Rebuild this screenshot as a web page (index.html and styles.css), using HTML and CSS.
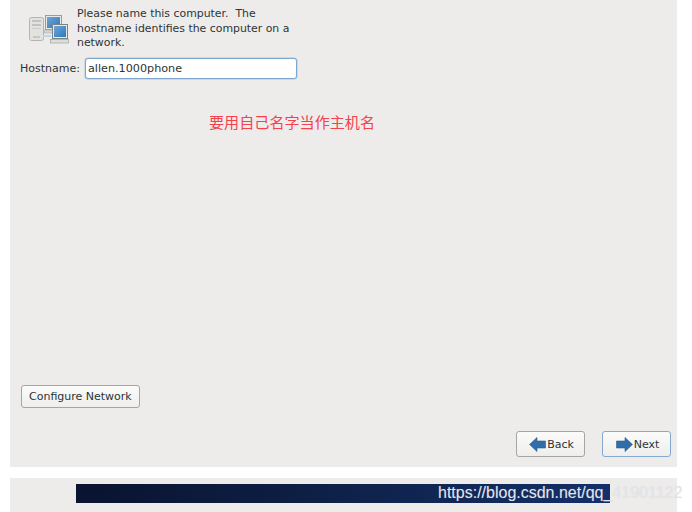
FILE: index.html
```html
<!DOCTYPE html>
<html lang="en">
<head>
<meta charset="utf-8">
<title>Hostname</title>
<link rel="stylesheet" href="styles.css">
</head>
<body>
<main class="panel">
  <div class="intro">
    <svg class="computers" width="40" height="30" viewBox="0 0 40 30" aria-hidden="true">
      <defs>
        <linearGradient id="scr" x1="0" y1="0" x2="1" y2="1">
          <stop offset="0" stop-color="#6ea6d8"/>
          <stop offset="1" stop-color="#2f78bd"/>
        </linearGradient>
      </defs>
      <rect x="0.5" y="2.5" width="14" height="23" rx="2" fill="#e2e3e0" stroke="#b3b5b2"/>
      <rect x="3" y="5" width="9" height="2" fill="#c2c4c0"/>
      <rect x="3" y="9" width="9" height="2" fill="#c2c4c0"/>
      <rect x="3" y="13" width="9" height="1" fill="#cbcdc9"/>
      <rect x="4" y="21" width="7" height="2" fill="#c6c8c4"/>
      <rect x="14" y="20" width="8" height="2" fill="#b8d6ee"/>
      <rect x="16.5" y="0.5" width="16" height="14" fill="#e9eae7" stroke="#9a9c99"/>
      <rect x="18" y="2" width="13" height="11" fill="url(#scr)"/>
      <rect x="15.5" y="15" width="17" height="3" fill="#d3d5d1" stroke="#aeb0ad" stroke-width="0.6"/>
      <rect x="23.5" y="9.5" width="15" height="14" fill="#e9eae7" stroke="#7f817e"/>
      <rect x="25" y="11" width="12" height="11" fill="url(#scr)"/>
      <rect x="21.5" y="24.5" width="18" height="3.5" fill="#dcdeda" stroke="#959794" stroke-width="0.6"/>
    </svg>
    <p class="intro-text">Please name this computer.&nbsp; The hostname identifies the computer on a network.</p>
  </div>
  <div class="host-row">
    <label class="host-label" for="host">Hostname:</label>
    <input class="host-input" id="host" type="text" value="allen.1000phone">
  </div>
  <p class="note">要用自己名字当作主机名</p>
  <div class="config-row">
    <button class="btn" type="button">Configure Network</button>
  </div>
  <div class="nav-row">
    <button class="btn nav-btn" type="button">
      <svg width="17" height="15" viewBox="0 0 17 15" aria-hidden="true"><path d="M0.5 7.5 8 0.5V4H16.5V11H8V14.5Z" fill="#2f6ea8" stroke="#2a5f92" stroke-width="0.6"/></svg>
      Back
    </button>
    <button class="btn nav-btn focus" type="button">
      <svg width="17" height="15" viewBox="0 0 17 15" aria-hidden="true"><path d="M16.5 7.5 9 0.5V4H0.5V11H9V14.5Z" fill="#2f6ea8" stroke="#2a5f92" stroke-width="0.6"/></svg>
      Next
    </button>
  </div>
</main>
<footer class="footer">
  <div class="banner"></div>
  <span class="watermark">https://blog.csdn.net/qq_41901122</span>
</footer>
</body>
</html>
```

FILE: styles.css
```css
html, body {
  margin: 0;
  padding: 0;
  height: 512px;
  overflow: hidden;
  background: #fff;
}
body {
  font-family: "DejaVu Sans", sans-serif;
  font-size: 11px;
  color: #2e3436;
}
.panel {
  width: 667px;
  height: 467px;
  margin-left: 10px;
  background: #edecea;
  display: flex;
  flex-direction: column;
  box-sizing: border-box;
  padding: 6px 6px 10px 10px;
}
.intro {
  display: flex;
  align-items: flex-start;
  gap: 8px;
  padding-left: 9px;
}
.computers {
  margin-top: 9px;
  flex: none;
}
.intro-text {
  margin: 1px 0 0;
  width: 222px;
  font-size: 10.9px;
  line-height: 14.5px;
}
.host-row {
  display: flex;
  align-items: center;
  gap: 5px;
  margin-top: 7px;
}
.host-input {
  width: 212px;
  height: 21px;
  box-sizing: border-box;
  padding: 0 3px 0 2px;
  border: 1px solid #7fa6cf;
  border-radius: 3px;
  background: #fff;
  font: inherit;
  font-size: 11.2px;
  color: #2e3436;
  box-shadow: 0 0 0 0.5px #a9c5e2;
  outline: none;
}
.note {
  margin: 32px 0 0 189px;
  font-family: "Noto Sans CJK SC", sans-serif;
  font-size: 15.1px;
  line-height: 20px;
  color: #f5404e;
}
.config-row {
  margin-top: auto;
  margin-left: 1px;
}
.btn {
  height: 23px;
  box-sizing: border-box;
  padding: 0 7px;
  border: 1px solid #a6a5a1;
  border-radius: 3px;
  background: linear-gradient(#fbfbfa, #eeeeec);
  font: inherit;
  color: #2e3436;
}
.nav-row {
  display: flex;
  justify-content: flex-end;
  gap: 17px;
  margin-top: 23px;
}
.nav-btn {
  width: 69px;
  height: 26px;
  display: flex;
  align-items: center;
  justify-content: center;
  gap: 1px;
  padding: 0 0 0 2px;
}
.focus {
  border-color: #86a9cf;
}
.footer {
  position: relative;
  width: 667px;
  height: 34px;
  margin: 11px 0 0 10px;
  background: #edecea;
  padding-top: 6px;
  box-sizing: border-box;
}
.banner {
  width: 534px;
  height: 19px;
  margin-left: 66px;
  background: linear-gradient(90deg, #0a1330, #0e2148 50%, #14306a);
}
.watermark {
  position: absolute;
  left: 428px;
  top: 5px;
  font-family: "Liberation Sans", sans-serif;
  font-size: 16px;
  line-height: 20px;
  color: #e2e5ec;
  white-space: nowrap;
  text-shadow: 0 0 1px rgba(190, 190, 190, 0.3);
}
```
